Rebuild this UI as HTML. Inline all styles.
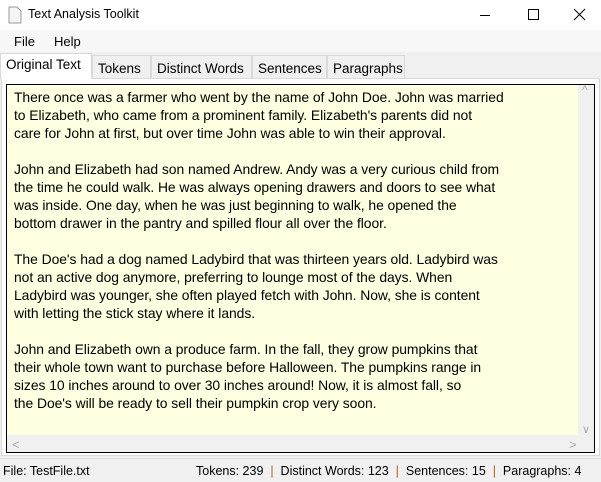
<!DOCTYPE html>
<html><head><style>
*{margin:0;padding:0;box-sizing:border-box}
body{width:601px;height:482px;background:#f0f0f0;font-family:"Liberation Sans",sans-serif;font-size:12.5px;color:#000;position:relative;overflow:hidden}
.title{position:absolute;left:0;top:0;width:601px;height:30px;background:#fff}
.title .t{position:absolute;left:28px;top:7px;font-size:12.5px}
.menu{position:absolute;top:30px;left:0;width:601px;height:22px;background:#f7f7f7}
.menu span{position:absolute;top:4px;font-size:13px}
.tab{position:absolute;top:55px;height:23px;border:1px solid #d9d9d9;border-bottom:none;background:#f0f0f0;padding:5px 0 0 5px;font-size:13.5px}
.tab.sel{top:53px;height:26px;background:#fff;padding-top:3px;border-color:#d9d9d9}
.panel{position:absolute;left:1px;top:78px;width:599px;height:378px;background:#fff;border:1px solid #d9d9d9}
.box{position:absolute;left:6px;top:84px;width:589px;height:369px;border:1px solid #000;background:#f0f0f0}
.text{position:absolute;left:0;top:0;width:571px;height:350px;background:#ffffe1;padding:3px 0 0 7px;font-size:13.9px;line-height:18px;white-space:pre;letter-spacing:-0.05px}
.status{position:absolute;top:458px;left:0;width:601px;height:24px;border-top:1px solid #dcdcdc;background:#f0f0f0;font-size:12.5px}
.status span{position:absolute;top:5px}
</style></head><body>
<div class="title">
<svg style="position:absolute;left:8px;top:6px" width="14" height="18"><path d="M1 1h8l4 4v12H1z" fill="#f4f4f4" stroke="#999"/></svg>
<span class="t">Text Analysis Toolkit</span>
<svg style="position:absolute;left:480px;top:8px" width="110" height="14"><path d="M0 7.5h10" stroke="#000"/><path d="M48.5 1.5h10v10h-10z" fill="none" stroke="#000"/><path d="M94 1l11 11M105 1l-11 11" stroke="#000"/></svg>
</div>
<div class="menu"><span style="left:14px">File</span><span style="left:54px">Help</span></div>
<div class="panel"></div>
<div class="tab sel" style="left:0;width:92px">Original Text</div>
<div class="tab" style="left:92px;width:59px">Tokens</div>
<div class="tab" style="left:151px;width:101px">Distinct Words</div>
<div class="tab" style="left:252px;width:75px">Sentences</div>
<div class="tab" style="left:327px;width:78px">Paragraphs</div>
<div class="box"><div class="text">There once was a farmer who went by the name of John Doe. John was married
to Elizabeth, who came from a prominent family. Elizabeth's parents did not
care for John at first, but over time John was able to win their approval.

John and Elizabeth had son named Andrew. Andy was a very curious child from
the time he could walk. He was always opening drawers and doors to see what
was inside. One day, when he was just beginning to walk, he opened the
bottom drawer in the pantry and spilled flour all over the floor.

The Doe's had a dog named Ladybird that was thirteen years old. Ladybird was
not an active dog anymore, preferring to lounge most of the days. When
Ladybird was younger, she often played fetch with John. Now, she is content
with letting the stick stay where it lands.

John and Elizabeth own a produce farm. In the fall, they grow pumpkins that
their whole town want to purchase before Halloween. The pumpkins range in
sizes 10 inches around to over 30 inches around! Now, it is almost fall, so
the Doe's will be ready to sell their pumpkin crop very soon.</div>
<span style="position:absolute;left:575px;top:-2px;color:#aaa;font-size:12px">^</span>
<span style="position:absolute;left:575px;top:338px;color:#aaa;font-size:11px">&#x2228;</span>
<span style="position:absolute;left:5px;top:352px;color:#aaa;font-size:13px">&lt;</span>
<span style="position:absolute;left:562px;top:352px;color:#aaa;font-size:13px">&gt;</span>
</div>
<div class="status">
<span style="left:3px">File: TestFile.txt</span>
<span style="left:196px">Tokens: 239 &nbsp;<b style="font-weight:normal;color:#b06020">|</b>&nbsp; Distinct Words: 123 &nbsp;<b style="font-weight:normal;color:#b06020">|</b>&nbsp; Sentences: 15 &nbsp;<b style="font-weight:normal;color:#b06020">|</b>&nbsp; Paragraphs: 4</span>
</div>
</body></html>
